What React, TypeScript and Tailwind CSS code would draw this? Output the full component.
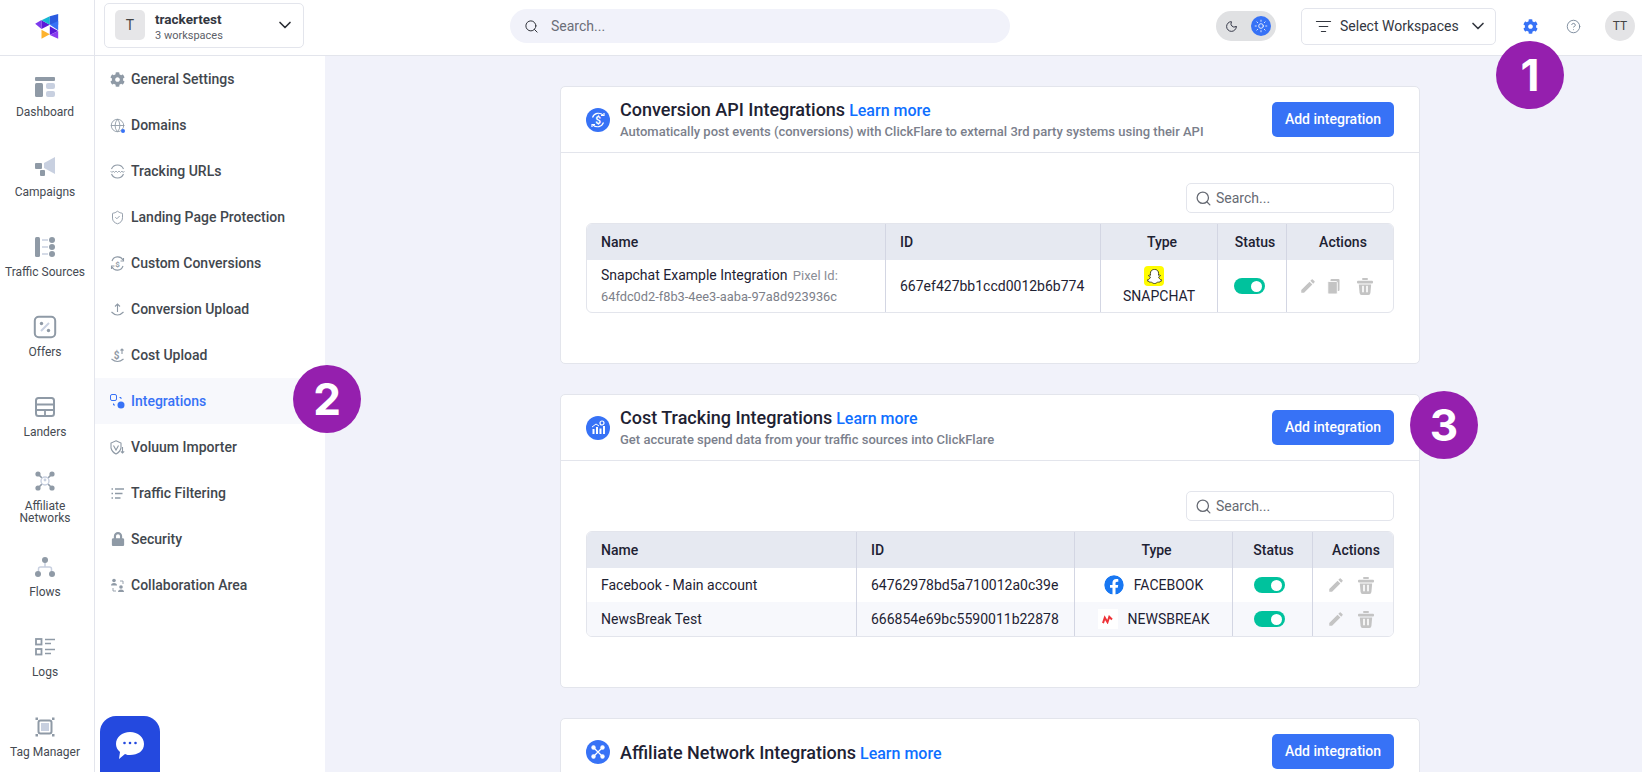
import { ChevronDown, CircleHelp, Globe, ListFilter, Moon, Search, ShieldCheck, Sun } from "lucide-react";
import { FaCog, FaFacebook, FaLock, FaSnapchatGhost } from "react-icons/fa";
import { MdEdit } from "react-icons/md";
import type { ReactNode } from "react";

const D = "#8f9aa6";
const L = "#c8d0e0";

function Rail({ children }: { children: ReactNode }) {
  return (
    <svg width="20" height="20" viewBox="0 0 20 20" fill="none" className="overflow-visible">
      {children}
    </svg>
  );
}

const railItems: { label: ReactNode; icon: ReactNode }[] = [
  {
    label: "Dashboard",
    icon: (
      <Rail>
        <rect x="0" y="0" width="20" height="4" rx="1" fill={D} />
        <rect x="0" y="6" width="8" height="14" rx="1.5" fill={D} />
        <rect x="11" y="6" width="9" height="6" rx="2" fill={L} />
        <rect x="11" y="14" width="9" height="6" rx="2" fill={L} />
      </Rail>
    ),
  },
  {
    label: "Campaigns",
    icon: (
      <Rail>
        <path d="M20 0 V17 L9 11 V6 Z" fill={L} />
        <rect x="0" y="6" width="7" height="6" rx="1" fill={D} />
        <rect x="5" y="13" width="5" height="6" rx="1" fill={D} />
      </Rail>
    ),
  },
  {
    label: "Traffic Sources",
    icon: (
      <Rail>
        <rect x="0" y="0" width="5" height="20" rx="1.5" fill={D} />
        <circle cx="17" cy="3" r="3" fill={D} />
        <circle cx="17" cy="10" r="3" fill={D} />
        <circle cx="17" cy="17" r="3" fill={D} />
        <path d="M7 3 H13 M7 10 H13 M7 17 H13" stroke={L} strokeWidth="1.5" />
      </Rail>
    ),
  },
  {
    label: "Offers",
    icon: (
      <Rail>
        <rect x="-0.2" y="-0.2" width="20.4" height="20.4" rx="4" stroke={D} strokeWidth="2" />
        <path d="M6 14 L14 6" stroke={L} strokeWidth="2" />
        <circle cx="6.5" cy="6.5" r="1.7" fill={D} />
        <circle cx="13.5" cy="13.5" r="1.7" fill={D} />
      </Rail>
    ),
  },
  {
    label: "Landers",
    icon: (
      <Rail>
        <rect x="1" y="1" width="18" height="18" rx="2.5" stroke={D} strokeWidth="2" />
        <path d="M1 7.5 H19 M1 13 H19 M10 13 V19" stroke={D} strokeWidth="1.8" />
      </Rail>
    ),
  },
  {
    label: (
      <>
        Affiliate
        <br />
        Networks
      </>
    ),
    icon: (
      <Rail>
        <path d="M3 3 L17 17 M17 3 L3 17" stroke={D} strokeWidth="1.6" />
        <circle cx="3" cy="3" r="2.6" fill={D} />
        <circle cx="17" cy="3" r="2.6" fill={D} />
        <circle cx="3" cy="17" r="2.6" fill={D} />
        <circle cx="17" cy="17" r="2.6" fill={D} />
        <circle cx="10" cy="10" r="4" fill="white" stroke={L} strokeWidth="1.4" />
        <circle cx="10" cy="9" r="1.4" fill={L} />
      </Rail>
    ),
  },
  {
    label: "Flows",
    icon: (
      <Rail>
        <path d="M10 4 V10 M3.5 16 V12 Q3.5 10 5.5 10 H14.5 Q16.5 10 16.5 12 V16" stroke={L} strokeWidth="1.5" />
        <circle cx="10" cy="3" r="3" fill={D} />
        <circle cx="3" cy="17" r="3" fill={D} />
        <circle cx="17" cy="17" r="3" fill={D} />
      </Rail>
    ),
  },
  {
    label: "Logs",
    icon: (
      <Rail>
        <rect x="1" y="2" width="5.5" height="5.5" stroke={D} strokeWidth="1.8" />
        <rect x="1" y="12" width="5.5" height="5.5" stroke={D} strokeWidth="1.8" />
        <path d="M10 2.5 H20 M10 6.5 H16 M10 12.5 H20 M10 16.5 H16" stroke={D} strokeWidth="1.7" />
      </Rail>
    ),
  },
  {
    label: "Tag Manager",
    icon: (
      <Rail>
        <rect x="3.5" y="3.5" width="13" height="13" rx="2" stroke={D} strokeWidth="2" />
        <rect x="6" y="6" width="8" height="8" fill={L} />
        <rect x="0.5" y="0.5" width="2.5" height="2.5" fill={D} />
        <rect x="17" y="0.5" width="2.5" height="2.5" fill={D} />
        <rect x="0.5" y="17" width="2.5" height="2.5" fill={D} />
        <rect x="17" y="17" width="2.5" height="2.5" fill={D} />
      </Rail>
    ),
  },
];

const G = "#8f9aa6";

function Sub({ children }: { children: ReactNode }) {
  return (
    <svg width="15" height="15" viewBox="0 0 15 15" fill="none" stroke={G} strokeWidth="1.1">
      {children}
    </svg>
  );
}

const subItems: { label: string; icon: ReactNode; active?: boolean }[] = [
  { label: "General Settings", icon: <FaCog size={15} color="#8f9aa6" /> },
  {
    label: "Domains",
    icon: (
      <span className="relative flex">
        <Globe size={15} color={G} strokeWidth={1.4} />
        <span className="absolute bottom-0 right-0 h-[4px] w-[4px] rounded-full bg-[#3772f6]" />
      </span>
    ),
  },
  {
    label: "Tracking URLs",
    icon: (
      <Sub>
        <path d="M1.5 5 A6.5 6.5 0 0 1 13.5 5 M1.5 10 A6.5 6.5 0 0 0 13.5 10" />
        <path d="M0.5 7 L2 8.5 L3.2 7 L4.5 8.5 L6 7 L7.5 8.5 L9 7 L10.5 8.5 L12 7 L13.2 8.5 L14.5 7" strokeWidth="0.8" />
      </Sub>
    ),
  },
  { label: "Landing Page Protection", icon: <ShieldCheck size={15} color={G} strokeWidth={1.5} /> },
  {
    label: "Custom Conversions",
    icon: (
      <Sub>
        <path d="M2 5 A6 6 0 0 1 13 4 M13 10 A6 6 0 0 1 2 11" />
        <path d="M13.5 2 V5 H10.5 M1.5 13 V10 H4.5" />
        <text x="7.5" y="10.5" fontSize="8" textAnchor="middle" fill={G} stroke="none" fontFamily="Roboto, sans-serif" fontWeight="700">$</text>
      </Sub>
    ),
  },
  {
    label: "Conversion Upload",
    icon: (
      <Sub>
        <path d="M7.5 10 V2 M5 4.5 L7.5 2 L10 4.5" />
        <path d="M1.5 10 Q7.5 16 13.5 10" />
      </Sub>
    ),
  },
  {
    label: "Cost Upload",
    icon: (
      <Sub>
        <path d="M1.5 11 Q7.5 16 13.5 11 M12 6 V1 M10.5 2.5 L12 1 L13.5 2.5" />
        <text x="6.5" y="10.5" fontSize="10" textAnchor="middle" fill={G} stroke="none" fontFamily="Roboto, sans-serif" fontWeight="700">$</text>
      </Sub>
    ),
  },
  {
    label: "Integrations",
    active: true,
    icon: (
      <svg width="15" height="15" viewBox="0 0 15 15" fill="none">
        <rect x="0.5" y="0.5" width="6" height="6" rx="1.5" stroke="#3772f6" />
        <circle cx="11" cy="11" r="3.5" fill="#3772f6" />
        <path d="M9.5 3.5 H11 V5 M3.5 9.5 V11 H5" stroke="#3772f6" />
      </svg>
    ),
  },
  {
    label: "Voluum Importer",
    icon: (
      <Sub>
        <path d="M6 0.8 L11 3 V8 Q10 12 6 14 Q2 12 1 8 V3 Z" />
        <path d="M3.5 5.5 L6 10 L8.5 5.5" />
        <path d="M12.5 7 V13 M10.8 11.3 L12.5 13 L14.2 11.3" />
      </Sub>
    ),
  },
  {
    label: "Traffic Filtering",
    icon: (
      <Sub>
        <path d="M1.5 3 H3 M1.5 7.5 H3 M1.5 12 H3" strokeWidth="1.4" />
        <path d="M5 3 H14 M5 7.5 H12.5 M5 12 H10.5" strokeWidth="1.4" />
      </Sub>
    ),
  },
  { label: "Security", icon: <FaLock size={14} color="#8f9aa6" /> },
  {
    label: "Collaboration Area",
    icon: (
      <Sub>
        <circle cx="4" cy="2.5" r="1.8" fill={G} stroke="none" />
        <path d="M1 7.5 Q1 5 4 5 Q7 5 7 7.5 Z" fill={G} stroke="none" />
        <circle cx="11" cy="9" r="1.8" fill={G} stroke="none" />
        <path d="M8 14 Q8 11.5 11 11.5 Q14 11.5 14 14 Z" fill={G} stroke="none" />
        <path d="M10 3 H13 V6 M3 10 V13 H6" strokeWidth="0.9" />
      </Sub>
    ),
  },
];

function Pill() {
  return (
    <div className="flex h-[16px] w-[31px] items-center justify-end rounded-full bg-[#00c29d] px-[3px]">
      <div className="h-[11px] w-[11px] rounded-full bg-white" />
    </div>
  );
}

function CardIcon({ children }: { children: ReactNode }) {
  return (
    <div className="flex h-[24px] w-[24px] shrink-0 items-center justify-center rounded-full bg-[#3772f6]">
      <svg width="18" height="18" viewBox="0 0 18 18" fill="none" stroke="white" strokeWidth="1.2">
        {children}
      </svg>
    </div>
  );
}

function CardHead({ icon, title, text }: { icon: ReactNode; title: string; text?: string }) {
  return (
    <div className="flex h-[66px] items-center justify-between border-b border-[#e3e5ec] pl-[25px] pr-[25px]">
      <div className="flex items-center gap-[10px]">
        {icon}
        <div className={text ? "" : "pt-[3px]"}>
          <div className="flex items-baseline gap-[4px]">
            <span className="text-[18px] font-medium leading-[24px] text-[#1e2233]">{title}</span>
            <span className="text-[16px] font-medium leading-[24px] text-[#0f6fff]">Learn more</span>
          </div>
          {text && <p className="text-[13px] font-medium leading-[18px] text-[#7b7f8c]">{text}</p>}
        </div>
      </div>
      <button className="h-[35px] w-[122px] rounded-[5px] bg-[#3772f6] text-[14px] font-medium text-white">Add integration</button>
    </div>
  );
}

function TableSearch() {
  return (
    <div className="ml-auto flex h-[30px] w-[208px] items-center gap-[4px] rounded-[5px] border border-[#e3e5ec] px-[8px] text-[14px] text-[#666a73]">
      <Search size={17} color="#666a73" strokeWidth={1.8} />
      <span>Search...</span>
    </div>
  );
}

function CopyIcon() {
  return (
    <svg width="13" height="15" viewBox="0 0 13 15" fill="#c4c4c4">
      <rect x="3.5" y="0" width="9" height="12" rx="1" />
      <rect x="0.8" y="2.5" width="9.5" height="12.5" rx="1" stroke="white" strokeWidth="0.9" />
    </svg>
  );
}

function TrashIcon() {
  return (
    <svg width="16" height="17" viewBox="0 0 16 17">
      <rect x="5" y="0" width="6" height="2" rx="1" fill="#c4c4c4" />
      <rect x="0" y="2.8" width="16" height="2.6" rx="1" fill="#c4c4c4" />
      <path d="M1.8 6.4 H14.2 L13.4 15 Q13.2 17 11.4 17 H4.6 Q2.8 17 2.6 15 Z" fill="#c4c4c4" />
      <rect x="5.2" y="7.8" width="1.6" height="6.5" fill="white" />
      <rect x="9.2" y="7.8" width="1.6" height="6.5" fill="white" />
    </svg>
  );
}

function Actions({ copy }: { copy?: boolean }) {
  return (
    <div className={`flex items-center justify-center text-[#c4c4c4] ${copy ? "gap-[10px] pr-[8px]" : "gap-[13px] pr-[6px]"}`}>
      <MdEdit size={18} />
      {copy && <CopyIcon />}
      <span className={copy ? "ml-[7px] flex" : "flex"}>
        <TrashIcon />
      </span>
    </div>
  );
}

const headCell = "flex items-center border-l border-[#d3d6e3] text-[14px] font-medium text-[#1e2233]";
const bodyCell = "flex items-center border-l border-[#d3d6e3] text-[14px] text-[#1e2233]";

function ConversionCard() {
  return (
    <section className="h-[278px] rounded-[5px] border border-[#e3e5ec] bg-white">
      <CardHead
        icon={
          <CardIcon>
            <path d="M3.5 6.5 A6.5 6.5 0 0 1 14 4 M14.5 11.5 A6.5 6.5 0 0 1 4 14" />
            <path d="M12 4.5 H15 V2 M6 13.5 H3 V16" />
            <text x="9" y="12.5" fontSize="10" fontWeight="700" textAnchor="middle" fill="white" stroke="none" fontFamily="Roboto, sans-serif">$</text>
          </CardIcon>
        }
        title="Conversion API Integrations"
        text="Automatically post events (conversions) with ClickFlare to external 3rd party systems using their API"
      />
      <div className="px-[25px] pt-[30px]">
        <TableSearch />
        <div className="mt-[10px] overflow-hidden rounded-[6px] border border-[#e3e5ec]">
          <div className="grid h-[36px] grid-cols-[298px_215px_117px_69px_1fr] bg-[#e6e9f1]">
            <div className="flex items-center pl-[14px] text-[14px] font-medium text-[#1e2233]">Name</div>
            <div className={`${headCell} pl-[14px]`}>ID</div>
            <div className={`${headCell} justify-center pl-[6px]`}>Type</div>
            <div className={`${headCell} justify-center pl-[6px]`}>Status</div>
            <div className={`${headCell} justify-center pl-[6px]`}>Actions</div>
          </div>
          <div className="grid h-[52px] grid-cols-[298px_215px_117px_69px_1fr]">
            <div className="flex flex-col justify-center pl-[14px] text-[14px] leading-[21px]">
              <div className="text-[#1e2233]">
                Snapchat Example Integration <span className="ml-[2px] text-[13px] text-[#8a8d96]">Pixel Id:</span>
              </div>
              <div className="text-[12.8px] text-[#7d8089]">64fdc0d2-f8b3-4ee3-aaba-97a8d923936c</div>
            </div>
            <div className={`${bodyCell} pl-[14px]`}>667ef427bb1ccd0012b6b774</div>
            <div className={`${bodyCell} flex-col justify-center`}>
              <div className="flex h-[20px] w-[20px] -translate-x-[5px] items-center justify-center rounded-[4px] bg-[#fffc00]">
                <FaSnapchatGhost size={15} color="white" stroke="black" strokeWidth={24} />
              </div>
              <span className="leading-[20px]">SNAPCHAT</span>
            </div>
            <div className={`${bodyCell} justify-center pr-[6px]`}>
              <Pill />
            </div>
            <div className={`${bodyCell} justify-center`}>
              <Actions copy />
            </div>
          </div>
        </div>
      </div>
    </section>
  );
}

const costRows = [
  {
    name: "Facebook - Main account",
    id: "64762978bd5a710012a0c39e",
    type: "FACEBOOK",
    logo: <FaFacebook size={20} color="#1877f2" className="rounded-full bg-white" />,
    bg: "bg-white",
  },
  {
    name: "NewsBreak Test",
    id: "666854e69bc5590011b22878",
    type: "NEWSBREAK",
    logo: (
      <div className="flex h-[20px] w-[20px] items-center justify-center bg-white">
        <svg width="11" height="9" viewBox="0 0 12 10" fill="none" stroke="#ee3338" strokeWidth="2.2">
          <path d="M1 9 L3 3 L6 8 L8 2 L11 5" />
        </svg>
      </div>
    ),
    bg: "bg-[#f7f8fc]",
  },
];

function CostCard() {
  return (
    <section className="mt-[30px] h-[294px] rounded-[5px] border border-[#e3e5ec] bg-white">
      <CardHead
        icon={
          <CardIcon>
            <path d="M4.5 15 V10 M8 15 V8 M11.5 15 V9.5 M15 15 V7" strokeWidth="2" />
            <path d="M3 8 L7 5 L10 7" strokeWidth="1" />
            <circle cx="13" cy="4" r="2" strokeWidth="1.2" />
          </CardIcon>
        }
        title="Cost Tracking Integrations"
        text="Get accurate spend data from your traffic sources into ClickFlare"
      />
      <div className="px-[25px] pt-[30px]">
        <TableSearch />
        <div className="mt-[10px] overflow-hidden rounded-[6px] border border-[#e3e5ec]">
          <div className="grid h-[36px] grid-cols-[269px_218px_158px_80px_1fr] bg-[#e6e9f1]">
            <div className="flex items-center pl-[14px] text-[14px] font-medium text-[#1e2233]">Name</div>
            <div className={`${headCell} pl-[14px]`}>ID</div>
            <div className={`${headCell} justify-center pl-[6px]`}>Type</div>
            <div className={`${headCell} justify-center pl-[2px]`}>Status</div>
            <div className={`${headCell} justify-center pl-[6px]`}>Actions</div>
          </div>
          {costRows.map((r) => (
            <div key={r.id} className={`grid h-[34px] grid-cols-[269px_218px_158px_80px_1fr] ${r.bg}`}>
              <div className="flex items-center pl-[14px] text-[14px] text-[#1e2233]">{r.name}</div>
              <div className={`${bodyCell} pl-[14px]`}>{r.id}</div>
              <div className={`${bodyCell} justify-center gap-[10px]`}>
                {r.logo}
                <span>{r.type}</span>
              </div>
              <div className={`${bodyCell} justify-center pr-[6px]`}>
                <Pill />
              </div>
              <div className={`${bodyCell} justify-center`}>
                <Actions />
              </div>
            </div>
          ))}
        </div>
      </div>
    </section>
  );
}

function AffiliateCard() {
  return (
    <section className="mt-[30px] rounded-[5px] border border-[#e3e5ec] bg-white">
      <CardHead
        icon={
          <CardIcon>
            <path d="M5 5 L13 13 M13 5 L5 13" />
            <circle cx="4.5" cy="4.5" r="1.6" fill="white" />
            <circle cx="13.5" cy="4.5" r="1.6" fill="white" />
            <circle cx="4.5" cy="13.5" r="1.6" fill="white" />
            <circle cx="13.5" cy="13.5" r="1.6" fill="white" />
          </CardIcon>
        }
        title="Affiliate Network Integrations"
      />
    </section>
  );
}

function Badge({ n, className }: { n: number; className: string }) {
  return (
    <div className={`absolute flex h-[68px] w-[68px] items-center justify-center rounded-full bg-[#951fae] font-[Inter,sans-serif] text-[44px] font-bold text-white ${className}`}>
      {n}
    </div>
  );
}

export default function App() {
  return (
    <div className="relative flex h-[772px] w-[1642px] flex-col overflow-hidden bg-white font-[Roboto,sans-serif] text-[#1e2233]">
      <header className="flex h-[56px] shrink-0 border-b border-[#e3e5ec]">
        <div className="flex h-full w-[95px] shrink-0 items-center justify-center border-r border-[#e3e5ec] pb-[3px]">
          <svg width="24" height="25" viewBox="99 39 71 75">
            <polygon points="99,68 118,57 118,84" fill="#7c3aed" />
            <polygon points="118,58 143,71 118,84" fill="#5b19d8" />
            <polygon points="118,58 143,46 143,71" fill="#15b8d4" />
            <polygon points="143,46 168,39 168,71 143,71" fill="#2a5be0" />
            <polygon points="143,71 168,60 168,88" fill="#3772f6" />
            <polygon points="143,76 168,90 143,102" fill="#5b19d8" />
            <polygon points="143,102 168,90 168,113" fill="#8b3df0" />
            <polygon points="118,86 143,100 118,113" fill="#fdb22e" />
          </svg>
        </div>
        <div className="flex flex-1 items-center pb-[3px]">
          <div className="mb-[2px] ml-[9px] flex h-[45px] w-[200px] shrink-0 items-center rounded-[5px] border border-[#e3e5ec] pl-[10px] pr-[8px]">
            <div className="flex h-[30px] w-[30px] items-center justify-center rounded-[5px] bg-[#e6e6e8] text-[14px] text-[#444]">T</div>
            <div className="ml-[10px] flex-1 pt-[4px]">
              <div className="text-[13.5px] font-bold leading-[17px] text-[#33373f]">trackertest</div>
              <div className="text-[11px] leading-[15px] text-[#5b6068]">3 workspaces</div>
            </div>
            <ChevronDown size={20} color="#2a2d33" strokeWidth={2} />
          </div>
          <div className="ml-[206px] flex h-[34px] w-[500px] shrink-0 items-center rounded-full bg-[#f1f2fa] pl-[14px] text-[14px] text-[#6b6e78]">
            <Search size={15} color="#30333a" strokeWidth={1.6} />
            <span className="ml-[12px]">Search...</span>
          </div>
          <div className="ml-[206px] flex h-[30px] w-[60px] shrink-0 items-center justify-between rounded-full bg-[#e0e1e3] pl-[9px] pr-[5px]">
            <Moon size={13} color="#1e2233" strokeWidth={1.6} />
            <div className="flex h-[20px] w-[20px] items-center justify-center rounded-full bg-[#3772f6]">
              <Sun size={14} color="white" strokeWidth={1.4} />
            </div>
          </div>
          <div className="ml-[25px] flex h-[37px] w-[195px] shrink-0 items-center rounded-[5px] border border-[#e3e5ec] pl-[13px] text-[14px] text-[#33373f]">
            <ListFilter size={17} color="#33373f" strokeWidth={1.6} />
            <span className="ml-[8px]">Select Workspaces</span>
            <ChevronDown size={20} color="#33373f" strokeWidth={2} className="ml-[9px]" />
          </div>
          <FaCog size={15} color="#3772f6" className="ml-[27px] shrink-0" />
          <CircleHelp size={15} color="#7b8a9c" strokeWidth={1.5} className="ml-[28px] shrink-0" />
          <div className="ml-[24px] flex h-[30px] w-[30px] shrink-0 items-center justify-center rounded-full bg-[#e4e4e6] text-[12px] text-[#444]">TT</div>
        </div>
      </header>

      <div className="flex min-h-0 flex-1">
        <nav className="w-[95px] shrink-0 border-r border-[#e3e5ec] pr-[4px] pt-[1px]">
          {railItems.map((item, i) => (
            <div key={i} className="flex h-[80px] flex-col items-center justify-center gap-[9px] text-center text-[12px] leading-[12px] text-[#454a52]">
              {item.icon}
              <span>{item.label}</span>
            </div>
          ))}
        </nav>

        <aside className="w-[230px] shrink-0">
          {subItems.map((item) => (
            <div
              key={item.label}
              className={`flex h-[46px] items-center gap-[6px] pl-[15px] text-[14px] font-medium ${item.active ? "bg-[#f7f8fc] text-[#3772f6]" : "text-[#42474e]"}`}
            >
              <span className="flex w-[15px] shrink-0 justify-center">{item.icon}</span>
              {item.label}
            </div>
          ))}
        </aside>

        <main className="min-w-0 flex-1 bg-[#f1f2fa] pl-[235px] pt-[30px]">
          <div className="w-[860px]">
            <ConversionCard />
            <CostCard />
            <AffiliateCard />
          </div>
        </main>
      </div>

      <div className="absolute bottom-0 left-[100px] flex h-[56px] w-[60px] items-start justify-center rounded-t-[16px] bg-[#2449df] pt-[16px]">
        <svg width="28" height="28" viewBox="0 0 28 28">
          <path d="M14 0 C22 0 28 5 28 12 C28 19 22 23 14 23 C12 23 11 23 9 22 L3 27 L4 20 C1.5 18 0 15 0 12 C0 5 6 0 14 0 Z" fill="white" />
          <circle cx="8.5" cy="11" r="1.3" fill="#2449df" />
          <circle cx="14" cy="11" r="1.3" fill="#2449df" />
          <circle cx="19.5" cy="11" r="1.3" fill="#2449df" />
        </svg>
      </div>

      <Badge n={1} className="left-[1496px] top-[41px]" />
      <Badge n={2} className="left-[293px] top-[365px]" />
      <Badge n={3} className="left-[1410px] top-[391px]" />
    </div>
  );
}
